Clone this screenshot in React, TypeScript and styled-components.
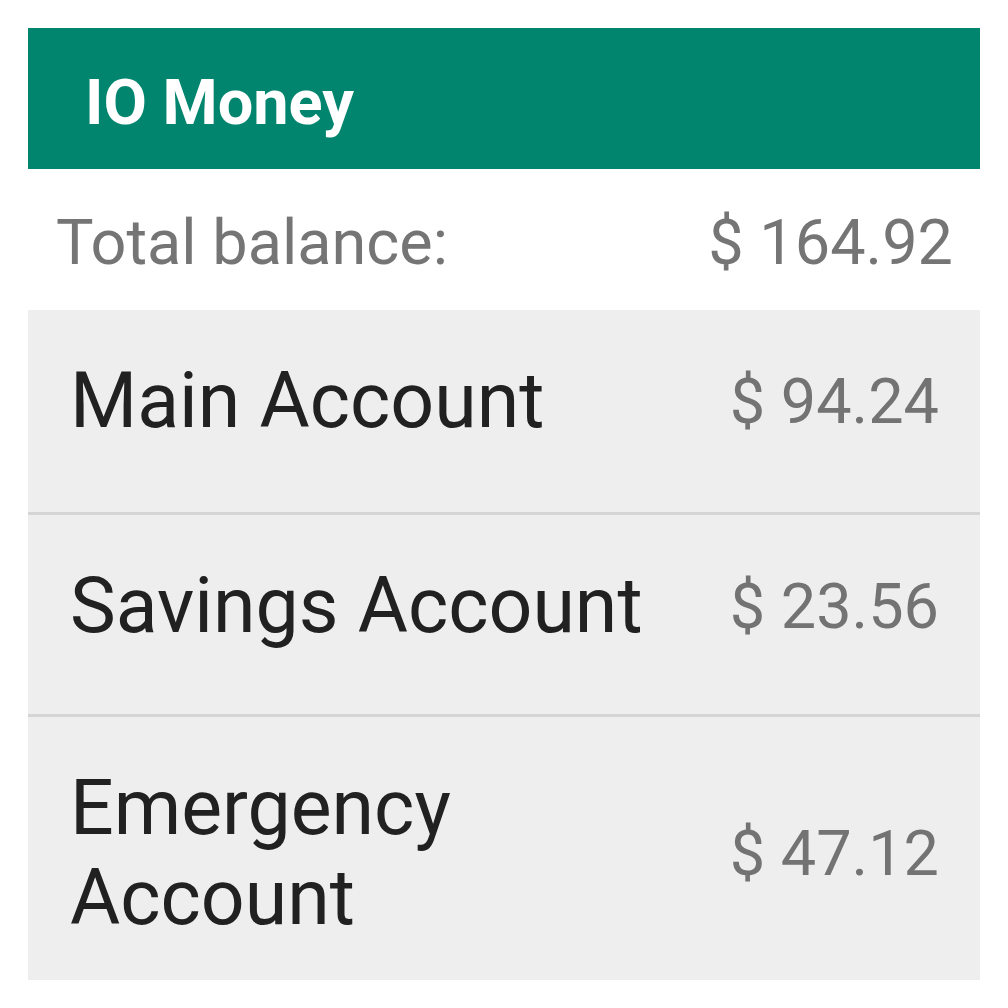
import React from "react";
import styled, { createGlobalStyle } from "styled-components";

const GlobalStyle = createGlobalStyle`
  html, body {
    margin: 0;
    padding: 0;
    background: #ffffff;
  }
  body {
    font-family: Roboto, "Noto Sans", "Liberation Sans", sans-serif;
  }
`;

const Screen = styled.div`
  width: 1008px;
  min-height: 1008px;
  box-sizing: border-box;
  padding: 28px;
  background: #ffffff;
`;

const AppBar = styled.header`
  height: 141px;
  box-sizing: border-box;
  padding: 38px 0 0 57px;
  background: #02856f;
`;

const Title = styled.h1`
  margin: 0;
  font-family: Roboto, "Noto Sans", sans-serif;
  font-weight: 700;
  font-size: 63px;
  line-height: normal;
  color: #ffffff;
`;

const TotalRow = styled.div`
  height: 141px;
  box-sizing: border-box;
  padding: 37px 27px 0 28px;
  display: flex;
  justify-content: space-between;
  align-items: flex-start;
  background: #ffffff;
`;

const TotalText = styled.span`
  font-size: 63px;
  line-height: normal;
  color: #757575;
`;

const AccountList = styled.div`
  display: flex;
  flex-direction: column;
  background: #eeeeee;
`;

const AccountRow = styled.div<{ $divider: boolean }>`
  min-height: 202px;
  box-sizing: border-box;
  padding: 46px 41px 37px 42px;
  border-top: ${(p) => (p.$divider ? "3px solid #d5d5d5" : "none")};
`;

const RowContent = styled.div`
  display: flex;
  align-items: center;
  justify-content: space-between;
  gap: 24px;
`;

const AccountName = styled.span`
  font-size: 77px;
  line-height: normal;
  color: #212121;
  max-width: 600px;
`;

const AccountAmount = styled.span`
  font-size: 63px;
  line-height: normal;
  color: #737373;
  white-space: nowrap;
`;

const accounts = [
  { name: "Main Account", amount: "$ 94.24" },
  { name: "Savings Account", amount: "$ 23.56" },
  { name: "Emergency Account", amount: "$ 47.12" },
];

export default function App() {
  return (
    <>
      <GlobalStyle />
      <Screen>
        <AppBar>
          <Title>IO Money</Title>
        </AppBar>
        <TotalRow>
          <TotalText>Total balance:</TotalText>
          <TotalText>$ 164.92</TotalText>
        </TotalRow>
        <AccountList>
          {accounts.map((a, i) => (
            <AccountRow key={a.name} $divider={i > 0}>
              <RowContent>
                <AccountName>{a.name}</AccountName>
                <AccountAmount>{a.amount}</AccountAmount>
              </RowContent>
            </AccountRow>
          ))}
        </AccountList>
      </Screen>
    </>
  );
}
